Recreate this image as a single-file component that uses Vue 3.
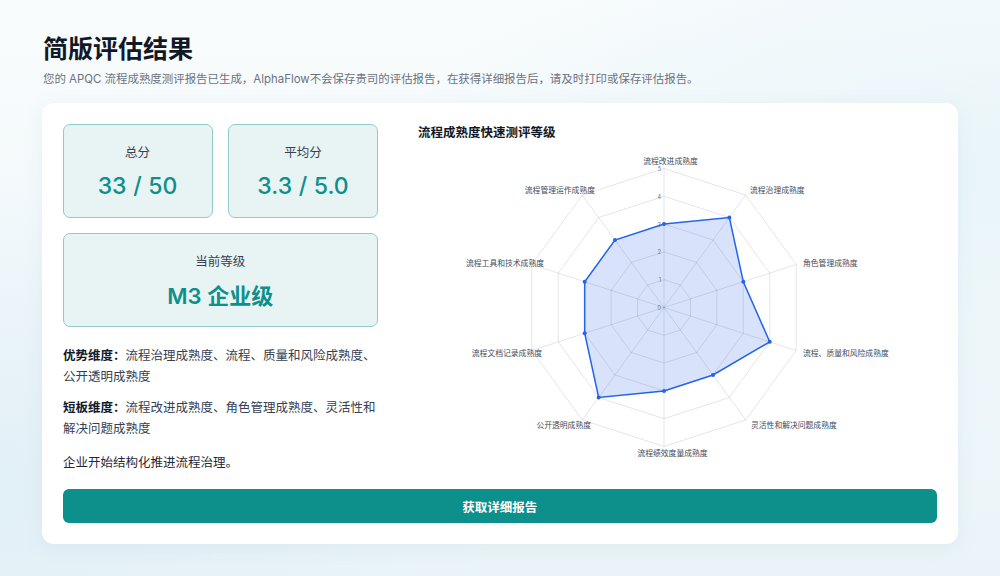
<script setup>
const cx = 246
const cy = 163.5
const radius = 139

const dimensions = [
  { name: '流程改进成熟度', score: 3, x: 252.5, y: 20, anchor: 'middle' },
  { name: '流程治理成熟度', score: 4, x: 332, y: 49, anchor: 'start' },
  { name: '角色管理成熟度', score: 3, x: 385, y: 122, anchor: 'start' },
  { name: '流程、质量和风险成熟度', score: 4, x: 385, y: 212, anchor: 'start' },
  { name: '灵活性和解决问题成熟度', score: 3, x: 333, y: 284, anchor: 'start' },
  { name: '流程绩效度量成熟度', score: 3, x: 254.5, y: 312, anchor: 'middle' },
  { name: '公开透明成熟度', score: 4, x: 173, y: 284, anchor: 'end' },
  { name: '流程文档记录成熟度', score: 3, x: 124, y: 212, anchor: 'end' },
  { name: '流程工具和技术成熟度', score: 3, x: 126, y: 122, anchor: 'end' },
  { name: '流程管理运作成熟度', score: 3, x: 177, y: 49, anchor: 'end' },
]

const point = (index, value) => {
  const angle = (Math.PI * 2 * index) / dimensions.length
  const r = (radius * value) / 5
  return [cx + r * Math.sin(angle), cy - r * Math.cos(angle)]
}

const ring = (value) => dimensions.map((_, i) => point(i, value).join(',')).join(' ')
const rings = [1, 2, 3, 4, 5]
const spokes = dimensions.map((_, i) => point(i, 5))
const scorePoints = dimensions.map((d, i) => point(i, d.score))
const scoreLine = scorePoints.map((p) => p.join(',')).join(' ')
</script>

<template>
  <div class="page">
    <h1 class="title">简版评估结果</h1>
    <p class="subtitle">您的 APQC 流程成熟度测评报告已生成，AlphaFlow不会保存贵司的评估报告，在获得详细报告后，请及时打印或保存评估报告。</p>

    <div class="card">
      <div class="columns">
        <div class="left">
          <div class="scores">
            <div class="score-box">
              <div class="score-label">总分</div>
              <div class="score-value">33 / 50</div>
            </div>
            <div class="score-box">
              <div class="score-label">平均分</div>
              <div class="score-value">3.3 / 5.0</div>
            </div>
            <div class="score-box level">
              <div class="score-label">当前等级</div>
              <div class="score-value">M3 企业级</div>
            </div>
          </div>

          <p class="summary first"><strong>优势维度：</strong>流程治理成熟度、流程、质量和风险成熟度、公开透明成熟度</p>
          <p class="summary"><strong>短板维度：</strong>流程改进成熟度、角色管理成熟度、灵活性和解决问题成熟度</p>
          <p class="summary last">企业开始结构化推进流程治理。</p>
        </div>

        <div class="right">
          <h2 class="chart-title">流程成熟度快速测评等级</h2>
          <svg class="radar" width="500" height="320" viewBox="0 0 500 320">
            <polygon class="score-area" :points="scoreLine" />
            <polygon
              v-for="r in rings"
              :key="r"
              class="grid-line"
              :points="ring(r)"
            />
            <line
              v-for="(p, i) in spokes"
              :key="i"
              class="grid-line"
              :x1="cx"
              :y1="cy"
              :x2="p[0]"
              :y2="p[1]"
            />
            <polygon class="score-outline" :points="scoreLine" />
            <circle
              v-for="(p, i) in scorePoints"
              :key="i"
              class="score-dot"
              :cx="p[0]"
              :cy="p[1]"
              r="2"
            />
            <text
              v-for="n in [0, 1, 2, 3, 4, 5]"
              :key="n"
              class="tick"
              :x="cx - 3"
              :y="cy - (radius * n) / 5 + 2.5"
            >{{ n }}</text>
            <text
              v-for="d in dimensions"
              :key="d.name"
              class="axis-label"
              :x="d.x"
              :y="d.y"
              :text-anchor="d.anchor"
            >{{ d.name }}</text>
          </svg>
        </div>
      </div>

      <button class="report-button">获取详细报告</button>
    </div>
  </div>
</template>

<style scoped>
.page {
  width: 1000px;
  height: 576px;
  box-sizing: border-box;
  padding: 33px 42px 0;
  overflow: hidden;
  font-family: Inter, "Noto Sans CJK SC", sans-serif;
  background:
    radial-gradient(ellipse 500px 300px at 0% 85%, #e2f0f7 0%, rgba(226, 240, 247, 0) 100%),
    radial-gradient(ellipse 600px 300px at 100% 30%, #e9f5f9 0%, rgba(233, 245, 249, 0) 100%),
    linear-gradient(180deg, #f9fcfd 0%, #eaf4f8 100%);
}

.title {
  margin: 0;
  padding-left: 1px;
  font-size: 25px;
  line-height: 32px;
  font-weight: 700;
  color: #111827;
}

.subtitle {
  margin: 4px 0 0;
  padding-left: 1px;
  font-size: 11.45px;
  line-height: 20px;
  color: #6b7280;
  white-space: nowrap;
}

.card {
  margin-top: 14px;
  height: 441px;
  box-sizing: border-box;
  padding: 20.5px 21px 21px 20.5px;
  background: #fff;
  border-radius: 12px;
  box-shadow: 0 4px 20px rgba(120, 160, 180, 0.1);
  display: flex;
  flex-direction: column;
}

.columns {
  display: flex;
  flex: 1;
  gap: 40px;
}

.left {
  width: 315.5px;
  flex-shrink: 0;
}

.scores {
  display: grid;
  grid-template-columns: 1fr 1fr;
  gap: 15.5px;
}

.score-box {
  height: 94px;
  box-sizing: border-box;
  border: 1.25px solid #8fcbca;
  border-radius: 7px;
  background: #e8f3f3;
  text-align: center;
  padding-top: 19px;
}

.score-box.level {
  grid-column: span 2;
}

.score-label {
  font-size: 12.5px;
  line-height: 18px;
  color: #374151;
}

.score-value {
  margin-top: 9px;
  font-size: 23px;
  line-height: 30px;
  font-weight: 500;
  word-spacing: 0.5px;
  color: #0d8f8c;
}

.level .score-value {
  margin-top: 10px;
  font-size: 22px;
  font-weight: 600;
  word-spacing: 0;
}

.summary {
  margin: 10px 0 0;
  padding-left: 0.5px;
  font-size: 12.5px;
  line-height: 21px;
  color: #374151;
}

.summary.first {
  margin-top: 18px;
}

.summary.last {
  margin-top: 13px;
  color: #1f2937;
}

.summary strong {
  font-weight: 700;
  color: #111827;
}

.right {
  flex: 1;
  min-width: 0;
}

.chart-title {
  margin: 0;
  font-size: 12.5px;
  line-height: 18px;
  font-weight: 700;
  color: #111827;
}

.radar {
  display: block;
  margin-top: 2px;
}

.grid-line {
  fill: none;
  stroke: rgba(0, 0, 0, 0.1);
  stroke-width: 1;
}

.score-area {
  fill: rgba(37, 99, 235, 0.18);
}

.score-outline {
  fill: none;
  stroke: #2563eb;
  stroke-width: 1.5;
}

.score-dot {
  fill: #2563eb;
}

.tick {
  font-size: 5.5px;
  fill: #6b7280;
  text-anchor: end;
}

.axis-label {
  font-size: 7.8px;
  fill: #414b5a;
}

.report-button {
  height: 34px;
  flex-shrink: 0;
  border: none;
  border-radius: 6px;
  background: #0d8f8c;
  color: #fff;
  font-family: inherit;
  font-size: 12.5px;
  font-weight: 700;
}
</style>
